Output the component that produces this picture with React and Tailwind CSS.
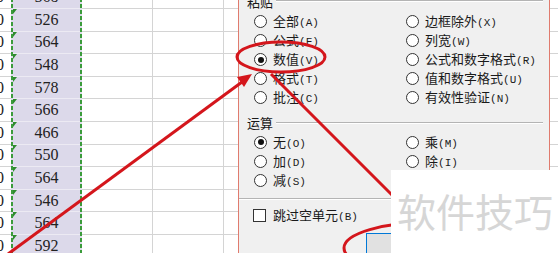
import React from 'react';

const values = ['568', '526', '564', '548', '578', '566', '466', '550', '564', '546', '564', '592'];

const pasteLeft = [
  { label: '全部', k: 'A' },
  { label: '公式', k: 'F' },
  { label: '数值', k: 'V', checked: true },
  { label: '格式', k: 'T' },
  { label: '批注', k: 'C' },
];

const pasteRight = [
  { label: '边框除外', k: 'X' },
  { label: '列宽', k: 'W' },
  { label: '公式和数字格式', k: 'R' },
  { label: '值和数字格式', k: 'U' },
  { label: '有效性验证', k: 'N' },
];

const opLeft = [
  { label: '无', k: 'O', checked: true },
  { label: '加', k: 'D' },
  { label: '减', k: 'S' },
];

const opRight = [
  { label: '乘', k: 'M' },
  { label: '除', k: 'I' },
];

function Cell({ children, className = '' }) {
  return (
    <div className={`h-[22.6px] shrink-0 border-b flex items-center ${className}`}>
      {children}
    </div>
  );
}

function DashLine() {
  return (
    <div className="w-[2px] shrink-0 -mt-[13.6px] bg-[#dcd9ea] bg-[repeating-linear-gradient(to_bottom,#3b9b3b_0_4px,transparent_4px_6px)]" />
  );
}

function Sheet() {
  return (
    <div className="flex h-full font-['Liberation_Serif',serif] text-[16px] text-[#222]">
      {/* cut-off column on the left */}
      <div className="w-[11px] shrink-0 flex flex-col -mt-[13.6px]">
        {values.map((v, i) => (
          <Cell key={i} className="border-[#d4d4d4] justify-end pr-[7px]">
            0
          </Cell>
        ))}
      </div>
      <DashLine />
      {/* copied values */}
      <div className="w-[67px] shrink-0 flex flex-col -mt-[13.6px] bg-[#dcd9ea]">
        {values.map((v, i) => (
          <Cell key={i} className="relative border-[#eceaf3] justify-center">
            <span className="absolute left-0 top-0 w-0 h-0 border-t-[5px] border-r-[4px] border-t-[#2e8b2e] border-r-transparent" />
            {v}
          </Cell>
        ))}
      </div>
      <DashLine />
      <div className="w-[71px] shrink-0 flex flex-col -mt-[13.6px] border-r border-[#d4d4d4]">
        {values.map((v, i) => (
          <Cell key={i} className="border-[#d4d4d4]" />
        ))}
      </div>
      <div className="w-[71px] shrink-0 flex flex-col -mt-[13.6px] border-r border-[#d4d4d4]">
        {values.map((v, i) => (
          <Cell key={i} className="border-[#d4d4d4]" />
        ))}
      </div>
      <div className="flex-1 flex flex-col -mt-[13.6px]">
        {values.map((v, i) => (
          <Cell key={i} className="border-[#d4d4d4]" />
        ))}
      </div>
    </div>
  );
}

function Key({ k }) {
  return (
    <span className="font-['Liberation_Mono','Noto_Sans_CJK_SC',monospace] text-[11px]">
      ({k})
    </span>
  );
}

function Radio({ label, k, checked }) {
  return (
    <div className="h-[19px] flex items-center gap-[6px]">
      <span className="w-[13px] h-[13px] shrink-0 rounded-full border border-[#333] bg-white flex items-center justify-center">
        {checked && <span className="w-[6px] h-[6px] rounded-full bg-[#111]" />}
      </span>
      <span className="whitespace-nowrap leading-none">
        {label}
        <Key k={k} />
      </span>
    </div>
  );
}

function GroupHeader({ title, className = '' }) {
  return (
    <div className={`h-[14px] shrink-0 flex items-center pl-[8px] pr-[6px] ${className}`}>
      <span className="leading-none whitespace-nowrap">{title}</span>
      <div className="flex-1 ml-[3px] h-[2px] border-t border-[#b4b4b4] border-b border-b-white" />
    </div>
  );
}

function PasteDialog() {
  return (
    <div className="absolute left-[238px] top-0 w-[312px] h-[253px] overflow-hidden bg-[#f0f0f0] border-x border-[#e07b6e] flex flex-col font-['Noto_Sans_CJK_SC',sans-serif] text-[13px] text-[#1a1a1a]">
      <GroupHeader title="粘贴" className="-mt-[6px]" />
      <div className="mt-[4.2px] pl-[15px] flex">
        <div className="w-[152px] shrink-0 flex flex-col">
          {pasteLeft.map((r) => (
            <Radio key={r.k} {...r} />
          ))}
        </div>
        <div className="flex flex-col">
          {pasteRight.map((r) => (
            <Radio key={r.k} {...r} />
          ))}
        </div>
      </div>

      <GroupHeader title="运算" className="mt-[8.8px]" />
      <div className="mt-[2.8px] pl-[15px] flex">
        <div className="w-[152px] shrink-0 flex flex-col">
          {opLeft.map((r) => (
            <Radio key={r.k} {...r} />
          ))}
        </div>
        <div className="flex flex-col">
          {opRight.map((r) => (
            <Radio key={r.k} {...r} />
          ))}
        </div>
      </div>

      <div className="mt-[8.5px] h-[2px] shrink-0 border-t border-[#b4b4b4] border-b border-b-white" />

      <div className="mt-[6.2px] h-[19px] shrink-0 pl-[14px] flex items-center gap-[7px]">
        <span className="w-[13px] h-[13px] shrink-0 border border-[#333] bg-white" />
        <span className="whitespace-nowrap leading-none">
          跳过空单元
          <Key k="B" />
        </span>
      </div>

      {/* OK button, mostly hidden under the watermark */}
      <div className="mt-[7.5px] ml-[127px] w-[75px] h-[24px] shrink-0 border border-[#0078d7] bg-[#e1e1e1]" />
    </div>
  );
}

function Annotations() {
  const red = '#d4161c';
  return (
    <svg className="absolute inset-0 pointer-events-none" width="558" height="253" viewBox="0 0 558 253">
      <ellipse cx="281" cy="57" rx="44" ry="15" fill="none" stroke={red} strokeWidth="3" />
      <line x1="8" y1="254" x2="242" y2="82" stroke={red} strokeWidth="3" />
      <polygon points="252,74 244,87 237,77" fill={red} />
      <line x1="271" y1="74" x2="400" y2="203" stroke={red} strokeWidth="3" />
      <ellipse cx="432" cy="248" rx="88" ry="26" fill="none" stroke={red} strokeWidth="3" />
    </svg>
  );
}

export default function App() {
  return (
    <div className="relative w-[558px] h-[253px] overflow-hidden bg-white">
      <Sheet />
      <PasteDialog />
      <Annotations />
      <div className="absolute left-[391px] top-[170px] w-[167px] h-[83px] bg-white pl-[6px] pt-[21px]">
        <span className="block leading-none whitespace-nowrap font-['Noto_Sans_CJK_SC',sans-serif] text-[39px] text-[#d6d6d6]">
          软件技巧
        </span>
      </div>
    </div>
  );
}
